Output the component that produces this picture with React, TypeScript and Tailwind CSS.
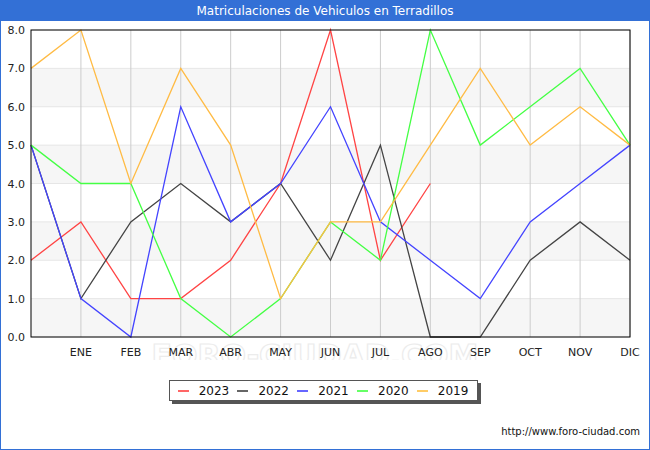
const series = [
  { n: "2023", c: "#ff4444", d: [2, 3, 1, 1, 2, 4, 8, 2, 4] },
  { n: "2022", c: "#444444", d: [5, 1, 3, 4, 3, 4, 2, 5, 0, 0, 2, 3, 2] },
  { n: "2021", c: "#4444ff", d: [5, 1, 0, 6, 3, 4, 6, 3, 2, 1, 3, 4, 5] },
  { n: "2020", c: "#44ff44", d: [5, 4, 4, 1, 0, 1, 3, 2, 8, 5, 6, 7, 5] },
  { n: "2019", c: "#ffbb44", d: [7, 8, 4, 7, 5, 1, 3, 3, 5, 7, 5, 6, 5] },
];
const legendColors = ["#ff6666", "#666666", "#6666ff", "#66ff66", "#ffcc66"];
const months = ["ENE", "FEB", "MAR", "ABR", "MAY", "JUN", "JUL", "AGO", "SEP", "OCT", "NOV", "DIC"];
const X0 = 31, X1 = 630, Y0 = 30, Y1 = 337;
const dx = (X1 - X0) / 12, dy = (Y1 - Y0) / 8;
const px = (i: number) => X0 + i * dx;
const py = (v: number) => Y1 - v * dy;

export default function App() {
  return (
    <div className="w-[650px] h-[450px] bg-white border border-[#3370d6] relative flex flex-col" style={{ fontFamily: '"DejaVu Sans", sans-serif' }}>
      <div className="h-[20px] bg-[#3370d6] text-white text-[12px] flex items-center justify-center">Matriculaciones de Vehiculos en Terradillos</div>
      <svg width="648" height="340" className="block -mt-[1px]" style={{ fontFamily: '"DejaVu Sans", sans-serif' }}>
        <g transform="translate(-1,-20)">
          <text x={315} y={366} fontSize="30" textAnchor="middle" fill="none" stroke="#ececec" strokeWidth="1.2" fontWeight="bold">FORO-CIUDAD.COM</text>
          {[0, 2, 4, 6].map((v) => (
            <rect key={v} x={X0} y={py(v + 1)} width={X1 - X0} height={dy} fill="#f6f6f6" />
          ))}
          {Array.from({ length: 9 }).map((_, v) => (
            <g key={v}>
              <line x1={X0} x2={X1} y1={py(v)} y2={py(v)} stroke="#e6e6e6" />
              <text x={25} y={py(v) + 4} fontSize="11" textAnchor="end" fill="#222">{v}.0</text>
            </g>
          ))}
          {months.map((m, i) => (
            <g key={m}>
              <line x1={px(i + 1)} x2={px(i + 1)} y1={Y0} y2={Y1} stroke="#cccccc" />
              <text x={px(i + 1)} y={356} fontSize="11" textAnchor="middle" fill="#222">{m}</text>
            </g>
          ))}
          {series.map((s) => (
            <polyline key={s.n} fill="none" stroke={s.c} strokeWidth="1.3" points={s.d.map((v, i) => `${px(i)},${py(v)}`).join(" ")} />
          ))}
          <rect x={X0} y={Y0} width={X1 - X0} height={Y1 - Y0} fill="none" stroke="#000" />
        </g>
      </svg>
      <div className="flex justify-center mt-[20px] ml-[-4px]">
        <div className="h-[21px] w-[309px] border border-[#555] bg-white shadow-[3px_3px_0_#555] flex items-center justify-around px-[4px] text-[12px] text-[#111]">
          {series.map((s, i) => (
            <div key={s.n} className="flex items-center gap-[10px]">
              <span className="inline-block w-[11px] h-[2px]" style={{ background: legendColors[i] }} />
              <span>{s.n}</span>
            </div>
          ))}
        </div>
      </div>
      <div className="absolute right-[9px] bottom-[10px] text-[10px] text-[#111]">http://www.foro-ciudad.com</div>
    </div>
  );
}
